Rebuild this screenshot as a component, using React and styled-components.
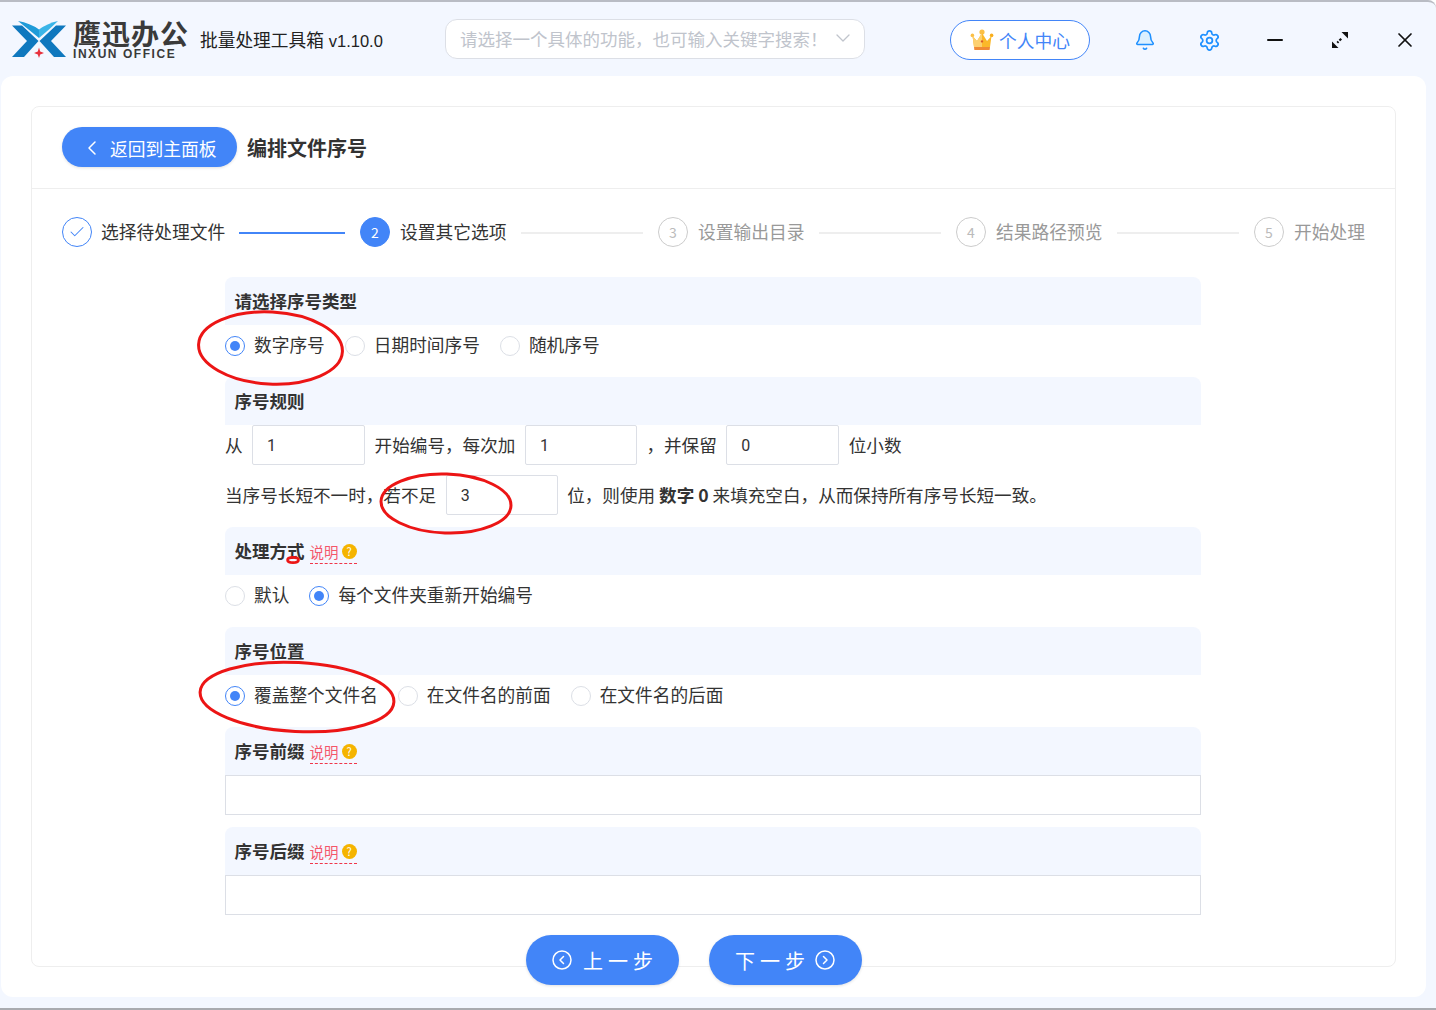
import React from "react";
import styled, { createGlobalStyle } from "styled-components";
import { Bell, Settings, ChevronLeft, ChevronDown, Check, X, Minus } from "lucide-react";

const Global = createGlobalStyle`
  html, body { margin: 0; padding: 0; background: #fff; }
  body { font-family: "Noto Sans CJK SC", "Noto Sans", sans-serif; color: #333; }
  * { box-sizing: border-box; }
`;

const BLUE = "#4285f8";
const TINT = "#f3f7ff";
const BODY_SIZE = "17.75px";

const Page = styled.div`
  position: relative;
  width: 1436px;
  height: 1010px;
  background: ${TINT};
  border-top: 2px solid #b9bcc4;
  border-bottom: 2px solid #a9abb0;
  border-top-right-radius: 8px;
  overflow: hidden;
`;
const Header = styled.header`
  height: 74px;
  display: flex;
  align-items: center;
  padding-left: 12px;
  & > * {
    flex: none;
  }
`;
const Logo = styled.div`
  display: flex;
  align-items: center;
  width: 188px;
`;
const LogoWords = styled.div`
  display: flex;
  flex-direction: column;
  margin-left: 7px;
  margin-top: 1px;
  color: #3a3a3a;
`;
const LogoName = styled.span`
  font-size: 28px;
  font-weight: 700;
  line-height: 27px;
  letter-spacing: 1px;
  white-space: nowrap;
`;
const LogoLatin = styled.span`
  font-family: "Liberation Sans", sans-serif;
  font-size: 12px;
  font-weight: 700;
  line-height: 12px;
  margin-top: 1px;
  letter-spacing: 1.55px;
  white-space: nowrap;
`;
const AppTitle = styled.div`
  font-family: "Liberation Sans", "Noto Sans CJK SC", sans-serif;
  font-size: 17.7px;
  color: #222;
  width: 245px;
  white-space: nowrap;
`;
const Version = styled.span`
  font-size: 16.5px;
`;
const Search = styled.div`
  width: 420px;
  height: 40px;
  border: 1px solid #dcdfe6;
  border-radius: 12px;
  background: #fff;
  display: flex;
  align-items: center;
  justify-content: space-between;
  padding: 0 9px 2px 14px;
  font-size: 17.5px;
  color: #c0c4cc;
  white-space: nowrap;
`;
const UserButton = styled.button`
  width: 140px;
  height: 40px;
  margin: 1px 0 0 85px;
  border: 1px solid ${BLUE};
  border-radius: 20px;
  background: #fff;
  display: flex;
  align-items: center;
  justify-content: center;
  gap: 5px;
  padding: 0;
  font: inherit;
  font-size: ${BODY_SIZE};
  color: ${BLUE};
`;
const WindowTools = styled.div`
  display: flex;
  align-items: center;
  margin: 2px 0 0 22px;
`;
const ToolSlot = styled.span`
  flex: none;
  width: 65px;
  height: 40px;
  display: flex;
  align-items: center;
  justify-content: center;
`;
const Panel = styled.main`
  width: 1425px;
  height: 921px;
  margin-left: 1px;
  padding: 30px;
  background: #fff;
  border-radius: 12px;
`;
const Card = styled.section`
  height: 861px;
  border: 1px solid #eeeeee;
  border-radius: 8px;
`;
const CardHead = styled.div`
  height: 82px;
  display: flex;
  align-items: center;
  gap: 10px;
  padding: 0 30px 2px;
  border-bottom: 1px solid #eeeeee;
`;
const BackButton = styled.button`
  width: 175px;
  height: 40px;
  border: 0;
  border-radius: 20px;
  background: ${BLUE};
  color: #fff;
  font: inherit;
  font-size: ${BODY_SIZE};
  display: flex;
  align-items: center;
  padding: 2px 0 0 18px;
  gap: 6px;
  white-space: nowrap;
  box-shadow: 0 1px 3px rgba(0, 0, 0, 0.12);
`;
const PageTitle = styled.h1`
  margin: 2px 0 0;
  font-size: 20px;
  font-weight: 700;
  color: #333;
`;
const Steps = styled.ol`
  list-style: none;
  margin: 0;
  padding: 28px 30px 0;
  display: flex;
`;
const Step = styled.li`
  flex: ${(p) => (p.$last ? "0 0 auto" : "1 1 0")};
  display: flex;
  align-items: center;
  height: 30px;
  padding-bottom: 2px;
  font-size: ${BODY_SIZE};
  color: ${(p) => (p.$state === "todo" ? "#999" : "#333")};
  white-space: nowrap;
`;
const StepDot = styled.span`
  flex: none;
  width: 30px;
  height: 30px;
  margin: 2px ${(p) => (p.$state === "done" ? 9 : 10)}px 0 0;
  border-radius: 50%;
  display: flex;
  align-items: center;
  justify-content: center;
  font-size: 14px;
  border: 1px solid ${(p) => (p.$state === "todo" ? "#ccc" : BLUE)};
  background: ${(p) => (p.$state === "active" ? BLUE : "#fff")};
  color: ${(p) => (p.$state === "active" ? "#fff" : p.$state === "done" ? BLUE : "#bbb")};
`;
const StepLine = styled.span`
  flex: 1;
  margin: 3px 15px 0 14px;
  height: 2px;
  background: ${(p) => (p.$on ? BLUE : "#eeeeee")};
`;
const Form = styled.div`
  width: 976px;
  margin: 30px 0 0 193px;
`;
const Field = styled.div`
  margin-bottom: 12px;
`;
const FieldHead = styled.div`
  height: 48px;
  background: ${TINT};
  border-radius: 8px 8px 0 0;
  padding: 0 0 2px 9.5px;
  display: flex;
  align-items: center;
  gap: 5px;
  font-size: 17.5px;
  font-weight: 700;
  color: #333;
`;
const Hint = styled.span`
  display: flex;
  align-items: center;
  gap: 3px;
  height: 24px;
  margin-top: 4px;
  border-bottom: 1px dashed #f0364a;
  font-size: 14.5px;
  font-weight: 400;
  color: #f4566a;
`;
const HelpDot = styled.span`
  width: 15px;
  height: 15px;
  border-radius: 50%;
  background: #f5b400;
  color: #fff;
  font-size: 11px;
  line-height: 15px;
  text-align: center;
`;
const Options = styled.div`
  height: 40px;
  display: flex;
  align-items: center;
  gap: 20px;
  padding-bottom: 2px;
`;
const Option = styled.label`
  display: flex;
  align-items: center;
  gap: 9px;
  font-size: 17.7px;
  white-space: nowrap;
`;
const Radio = styled.span`
  width: 20px;
  height: 20px;
  margin-top: 3px;
  border-radius: 50%;
  border: 1px solid ${(p) => (p.$on ? BLUE : "#dcdfe6")};
  background: #fff;
  display: flex;
  align-items: center;
  justify-content: center;
  &::after {
    content: "";
    width: 10px;
    height: 10px;
    border-radius: 50%;
    background: ${(p) => (p.$on ? BLUE : "transparent")};
  }
`;
const RuleRow = styled.div`
  height: 40px;
  display: flex;
  align-items: center;
  gap: 9.5px;
  padding-bottom: 2px;
  font-size: 17.6px;
  white-space: nowrap;
  & + & {
    margin-top: 10px;
  }
`;
const NumberBox = styled.input`
  width: ${(p) => p.$w || 112}px;
  height: 40px;
  margin-top: 2px;
  border: 1px solid #dcdfe6;
  border-radius: 2px;
  padding: 0 14px;
  font-family: Roboto, sans-serif;
  font-size: 16px;
  color: #333;
  outline: none;
`;
const WideBox = styled.input`
  display: block;
  width: 100%;
  height: 40px;
  border: 1px solid #dcdfe6;
  outline: none;
`;
const Footer = styled.div`
  display: flex;
  gap: 30px;
  padding-left: 494px;
  margin-top: 20px;
`;
const StepButton = styled.button`
  width: 153px;
  height: 50px;
  border: 0;
  border-radius: 25px;
  background: ${BLUE};
  color: #fff;
  font: inherit;
  font-size: 20px;
  letter-spacing: 5px;
  display: flex;
  align-items: center;
  gap: ${(p) => p.$gap}px;
  white-space: nowrap;
  padding: 0 0 0 26px;
  box-shadow: 0 1px 3px rgba(0, 0, 0, 0.12);
`;
const Annotations = styled.svg`
  position: absolute;
  left: 0;
  top: -2px;
  pointer-events: none;
`;

const LogoMark = () => (
  <svg width="54" height="38" viewBox="0 0 54 38">
    <path d="M0 5.5H10L26.5 21 12 37H0L15 21Z" fill="#0f78be" />
    <path d="M54 5.5H44L27.5 21 42 37H54L39 21Z" fill="#0f78be" />
    <path d="M6 1Q18 3 27 9.5V18Q16 9 6 1Z" fill="#1f9bd8" />
    <path d="M46 1Q36 3 27 9.5V18Q38 9 46 1Z" fill="#3ab5e8" />
    <path d="M27 27.5L28.2 31.5 32 33 28.2 34.5 27 38 25.8 34.5 22 33 25.8 31.5Z" fill="#e8303c" />
  </svg>
);

const Crown = () => (
  <svg width="24" height="24" viewBox="0 0 24 24">
    <circle cx="12" cy="4" r="2.6" fill="#fbbf45" />
    <circle cx="2.4" cy="7.4" r="1.8" fill="#fbbf45" />
    <circle cx="21.6" cy="7.4" r="1.8" fill="#f9ae1c" />
    <path d="M2.5 8L7 13 12 5 17 13 21.5 8 20 19H4Z" fill="#fbb829" />
    <path d="M2.5 8L7 13 12 5V19H4Z" fill="#fdd06f" />
    <path d="M4 19H20L19.6 22H4.4Z" fill="#f08a35" />
    <path d="M12 12L13.4 13.2 12 15 10.6 13.2Z" fill="#d9582a" />
  </svg>
);

const ExpandIcon = () => (
  <svg width="16" height="16" viewBox="0 0 16 16" fill="#111" stroke="none">
    <path d="M9.5 0H16V6.5Z" />
    <path d="M0 16V9.5L6.5 16Z" />
    <path d="M8.5 6L10 7.5 8.2 9.3 6.7 7.8Z" />
    <path d="M5.7 8.7L7.2 10.2 6 11.4 4.5 9.9Z" />
  </svg>
);

const CircleArrow = ({ dir }) => (
  <svg width="20" height="20" viewBox="0 0 20 20" fill="none" stroke="#fff" strokeWidth="1.5" strokeLinecap="round" strokeLinejoin="round">
    <circle cx="10" cy="10" r="9" />
    <path d={dir === "left" ? "M11.5 6.5L8 10l3.5 3.5" : "M8.5 6.5L12 10l-3.5 3.5"} />
  </svg>
);

const stepsData = [
  { label: "选择待处理文件", state: "done" },
  { label: "设置其它选项", state: "active" },
  { label: "设置输出目录", state: "todo" },
  { label: "结果路径预览", state: "todo" },
  { label: "开始处理", state: "todo" },
];

const HintTag = () => (
  <Hint>
    说明<HelpDot>?</HelpDot>
  </Hint>
);

const Choice = ({ on, children }) => (
  <Option>
    <Radio $on={on} />
    {children}
  </Option>
);

export default function App() {
  return (
    <Page>
      <Global />
      <Header>
        <Logo>
          <LogoMark />
          <LogoWords>
            <LogoName>鹰迅办公</LogoName>
            <LogoLatin>INXUN OFFICE</LogoLatin>
          </LogoWords>
        </Logo>
        <AppTitle>
          批量处理工具箱 <Version>v1.10.0</Version>
        </AppTitle>
        <Search>
          请选择一个具体的功能，也可输入关键字搜索！
          <ChevronDown size={24} color="#c0c4cc" strokeWidth={1.3} />
        </Search>
        <UserButton>
          <Crown />
          个人中心
        </UserButton>
        <WindowTools>
          <ToolSlot>
            <Bell size={22} color="#1e90ff" fill="#dcf0ff" strokeWidth={1.7} />
          </ToolSlot>
          <ToolSlot>
            <Settings size={23} color="#1e90ff" strokeWidth={1.8} />
          </ToolSlot>
          <ToolSlot>
            <Minus size={24} color="#111" strokeWidth={2} />
          </ToolSlot>
          <ToolSlot>
            <ExpandIcon />
          </ToolSlot>
          <ToolSlot>
            <X size={24} color="#111" strokeWidth={1.7} />
          </ToolSlot>
        </WindowTools>
      </Header>
      <Panel>
        <Card>
          <CardHead>
            <BackButton>
              <ChevronLeft size={24} strokeWidth={1.5} />
              返回到主面板
            </BackButton>
            <PageTitle>编排文件序号</PageTitle>
          </CardHead>
          <Steps>
            {stepsData.map((s, i) => {
              const last = i === stepsData.length - 1;
              return (
                <Step key={s.label} $state={s.state} $last={last}>
                  <StepDot $state={s.state}>
                    {s.state === "done" ? <Check size={18} strokeWidth={1.4} /> : i + 1}
                  </StepDot>
                  {s.label}
                  {!last && <StepLine $on={s.state === "done"} />}
                </Step>
              );
            })}
          </Steps>
          <Form>
            <Field>
              <FieldHead>请选择序号类型</FieldHead>
              <Options>
                <Choice on>数字序号</Choice>
                <Choice>日期时间序号</Choice>
                <Choice>随机序号</Choice>
              </Options>
            </Field>
            <Field>
              <FieldHead>序号规则</FieldHead>
              <RuleRow>
                从<NumberBox $w={113} defaultValue="1" readOnly />
                开始编号，每次加
                <NumberBox defaultValue="1" readOnly />
                ，并保留
                <NumberBox $w={113} defaultValue="0" readOnly />
                位小数
              </RuleRow>
              <RuleRow>
                当序号长短不一时，若不足
                <NumberBox defaultValue="3" readOnly />
                <span>
                  位，则使用 <b>数字 0</b> 来填充空白，从而保持所有序号长短一致。
                </span>
              </RuleRow>
            </Field>
            <Field>
              <FieldHead>
                处理方式
                <HintTag />
              </FieldHead>
              <Options>
                <Choice>默认</Choice>
                <Choice on>每个文件夹重新开始编号</Choice>
              </Options>
            </Field>
            <Field>
              <FieldHead>序号位置</FieldHead>
              <Options>
                <Choice on>覆盖整个文件名</Choice>
                <Choice>在文件名的前面</Choice>
                <Choice>在文件名的后面</Choice>
              </Options>
            </Field>
            <Field>
              <FieldHead>
                序号前缀
                <HintTag />
              </FieldHead>
              <WideBox readOnly />
            </Field>
            <Field>
              <FieldHead>
                序号后缀
                <HintTag />
              </FieldHead>
              <WideBox readOnly />
            </Field>
          </Form>
          <Footer>
            <StepButton $gap={11}>
              <CircleArrow dir="left" />
              上一步
            </StepButton>
            <StepButton $gap={5}>
              下一步
              <CircleArrow dir="right" />
            </StepButton>
          </Footer>
        </Card>
      </Panel>
      <Annotations width="1436" height="1010" fill="none" stroke="#ec1515">
        <ellipse cx="270.5" cy="348" rx="72" ry="36" strokeWidth="3" transform="rotate(3 270.5 348)" />
        <ellipse cx="446" cy="503.5" rx="65" ry="29.5" strokeWidth="3" transform="rotate(2 446 503.5)" />
        <ellipse cx="297" cy="697" rx="97" ry="34.5" strokeWidth="3" transform="rotate(3 297 697)" />
        <ellipse cx="293" cy="560" rx="5.5" ry="2.6" strokeWidth="2.6" />
      </Annotations>
    </Page>
  );
}
